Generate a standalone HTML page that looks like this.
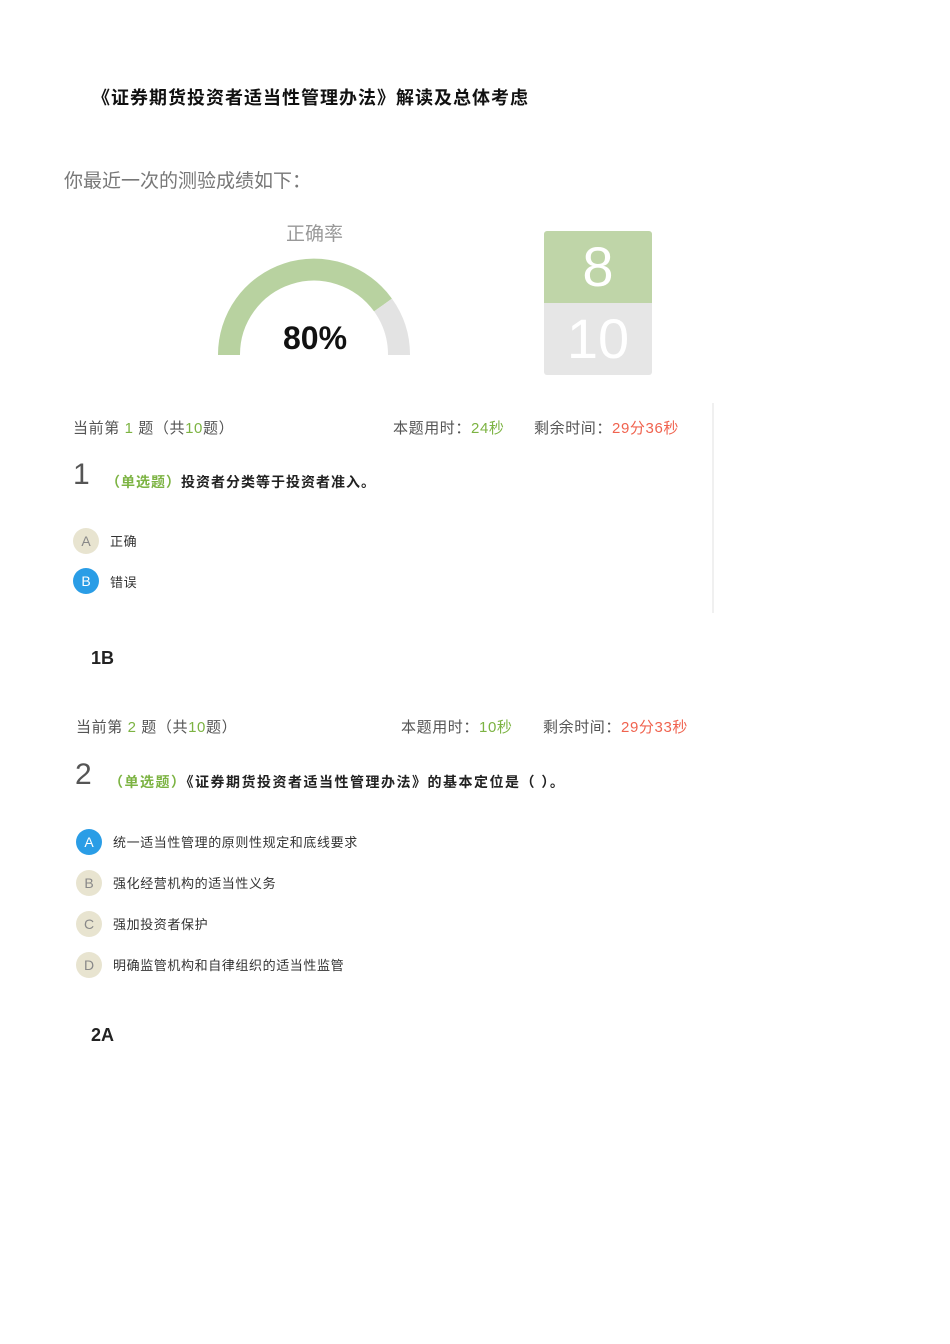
<!DOCTYPE html>
<html><head><meta charset="utf-8"><style>
body{margin:0;width:950px;height:1344px;background:#fff;font-family:"Liberation Sans","Noto Sans CJK SC",sans-serif;position:relative;overflow:hidden}
.a{position:absolute;white-space:nowrap}
.g{color:#7cb342}.r{color:#f0634f}
.gray{color:#555;font-size:15px;letter-spacing:0.6px}
.c{position:absolute;width:26px;height:26px;border-radius:50%;text-align:center;line-height:26px;font-size:14px}
.o{background:#e8e4d0;color:#888}.s{background:#2a9de6;color:#fff}
.t{font-size:13px;color:#333;letter-spacing:0.6px}
</style></head><body>
<div class="a" style="left:92px;top:84px;font-size:18px;font-weight:bold;color:#111;letter-spacing:1px">《证券期货投资者适当性管理办法》解读及总体考虑</div>
<div class="a" style="left:64px;top:166px;font-size:19px;color:#777">你最近一次的测验成绩如下：</div>
<div class="a" style="left:286px;top:219px;font-size:19px;color:#999">正确率</div>
<svg class="a" style="left:0;top:0" width="950" height="400">
<path d="M229 355 A85 85 0 0 1 383 305" fill="none" stroke="#b8d2a0" stroke-width="22"/>
<path d="M383 305 A85 85 0 0 1 399 355" fill="none" stroke="#e3e3e3" stroke-width="22"/>
</svg>
<div class="a" style="left:283px;top:320px;font-size:32px;font-weight:bold;color:#111">80%</div>
<div class="a" style="left:544px;top:231px;width:108px;height:72px;background:#bfd5a8;border-radius:3px 3px 0 0;color:#fff;font-size:56px;text-align:center;line-height:72px">8</div>
<div class="a" style="left:544px;top:303px;width:108px;height:72px;background:#e6e6e6;border-radius:0 0 3px 3px;color:#fff;font-size:56px;text-align:center;line-height:72px">10</div>
<div class="a" style="left:712px;top:403px;width:2px;height:210px;background:#f0f0f0"></div>

<div class="a gray" style="left:73px;top:417px">当前第 <span class="g">1</span> 题（共<span class="g">10</span>题）</div>
<div class="a gray" style="left:393px;top:417px">本题用时：<span class="g">24秒</span></div>
<div class="a gray" style="left:534px;top:417px">剩余时间：<span class="r">29分36秒</span></div>
<div class="a" style="left:73px;top:458px;font-size:30px;color:#555">1</div>
<div class="a" style="left:106px;top:472px;font-size:14px;font-weight:bold;color:#222;letter-spacing:1px"><span class="g">（单选题）</span>投资者分类等于投资者准入。</div>
<div class="c o" style="left:73px;top:528px">A</div><div class="a t" style="left:110px;top:531px">正确</div>
<div class="c s" style="left:73px;top:568px">B</div><div class="a t" style="left:110px;top:572px">错误</div>
<div class="a" style="left:91px;top:648px;font-size:18px;font-weight:bold;color:#222">1B</div>

<div class="a gray" style="left:76px;top:716px">当前第 <span class="g">2</span> 题（共<span class="g">10</span>题）</div>
<div class="a gray" style="left:401px;top:716px">本题用时：<span class="g">10秒</span></div>
<div class="a gray" style="left:543px;top:716px">剩余时间：<span class="r">29分33秒</span></div>
<div class="a" style="left:75px;top:758px;font-size:30px;color:#555">2</div>
<div class="a" style="left:109px;top:772px;font-size:14px;font-weight:bold;color:#222;letter-spacing:1.5px"><span class="g">（单选题）</span>《证券期货投资者适当性管理办法》的基本定位是（ ）。</div>
<div class="c s" style="left:76px;top:829px">A</div><div class="a t" style="left:113px;top:832px">统一适当性管理的原则性规定和底线要求</div>
<div class="c o" style="left:76px;top:870px">B</div><div class="a t" style="left:113px;top:873px">强化经营机构的适当性义务</div>
<div class="c o" style="left:76px;top:911px">C</div><div class="a t" style="left:113px;top:914px">强加投资者保护</div>
<div class="c o" style="left:76px;top:952px">D</div><div class="a t" style="left:113px;top:955px">明确监管机构和自律组织的适当性监管</div>
<div class="a" style="left:91px;top:1025px;font-size:18px;font-weight:bold;color:#222">2A</div>
</body></html>
